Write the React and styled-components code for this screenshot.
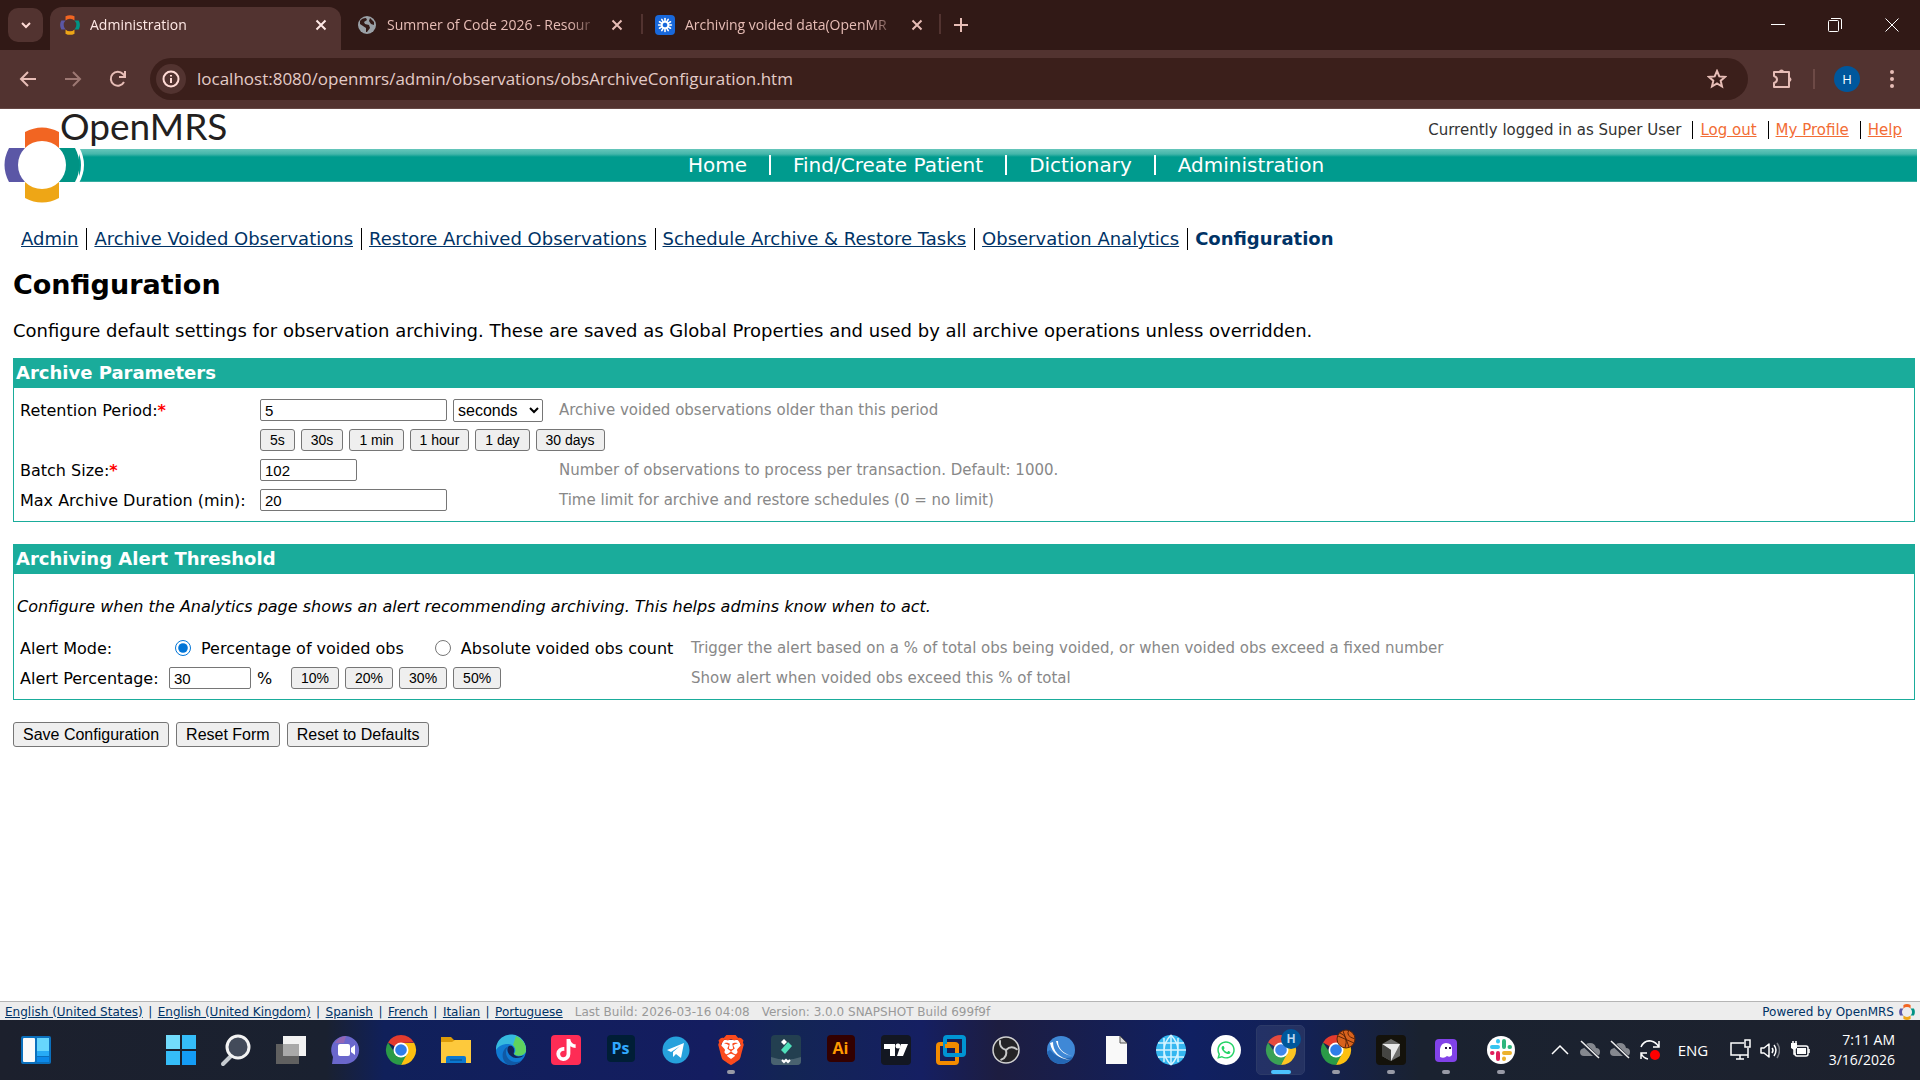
import React from "react"
import styled, { createGlobalStyle, css } from "styled-components"
import { FaBrave, FaTiktok, FaWhatsapp } from "react-icons/fa6"

const GlobalStyle = createGlobalStyle`
  * {
    box-sizing: border-box;
  }
  body {
    margin: 0;
    background: #ffffff;
    color: #000000;
    font-family: Verdana, "DejaVu Sans", sans-serif;
    font-size: 16px;
  }
  button, input, select {
    font-family: Arial, "Liberation Sans", sans-serif;
  }
`

const tabs = [
  { title: "Administration", icon: "openmrs", active: true },
  { title: "Summer of Code 2026 - Resour", icon: "globe" },
  { title: "Archiving voided data(OpenMR", icon: "talk" },
]

const sections = [
  "Admin",
  "Archive Voided Observations",
  "Restore Archived Observations",
  "Schedule Archive & Restore Tasks",
  "Observation Analytics",
]

const languages = [
  "English (United States)",
  "English (United Kingdom)",
  "Spanish",
  "French",
  "Italian",
  "Portuguese",
]

const OpenMrsMark = ({ size, hole = "#ffffff" }) => (
  <svg width={size} height={size} viewBox="0 0 76 76" aria-hidden="true">
    <path d="M21 5Q38 -4 55 5V24H21Z" fill="#f26522" />
    <path d="M21 71Q38 80 55 71V52H21Z" fill="#eea616" />
    <path d="M5 21Q-4 38 5 55H22V21Z" fill="#5b57a6" />
    <path d="M71 21Q80 38 71 55H54V21Z" fill="#009384" />
    <circle cx="38" cy="38" r="24" fill={hole} />
  </svg>
)

const GlobeMark = () => (
  <svg width="20" height="20" viewBox="0 0 20 20" aria-hidden="true">
    <circle cx="10" cy="10" r="9" fill="#9aa0a6" />
    <path
      d="M3 6Q5 3 9 3L10 5L7 7L8 9L12 10L13 13L10 17L9 17L9 13L6 11L3 9ZM13 3L17 7L17 10L14 9L12 6Z"
      fill="#331a17"
    />
  </svg>
)

const TalkMark = () => (
  <svg width="20" height="20" viewBox="0 0 20 20" aria-hidden="true">
    <rect width="20" height="20" rx="4" fill="#1868db" />
    <g stroke="#ffffff" strokeWidth="1.6" strokeLinecap="round">
      {[0, 30, 60, 90, 120, 150, 180, 210, 240, 270, 300, 330].map(angle => (
        <path key={angle} d="M10 7V3.6" transform={`rotate(${angle} 10 10)`} />
      ))}
    </g>
    <circle cx="10" cy="10" r="3.3" fill="none" stroke="#ffffff" strokeWidth="1.6" />
  </svg>
)

const tabMarks = {
  openmrs: <OpenMrsMark size={20} hole="#523330" />,
  globe: <GlobeMark />,
  talk: <TalkMark />,
}

const Line = ({ d, size = 20, box = 20, width = 2, children }) => (
  <svg
    width={size}
    height={size}
    viewBox={`0 0 ${box} ${box}`}
    fill="none"
    stroke="currentColor"
    strokeWidth={width}
    aria-hidden="true"
  >
    {d && <path d={d} />}
    {children}
  </svg>
)

const CloseMark = () => <Line size={12} box={12} d="M1.5 1.5L10.5 10.5M10.5 1.5L1.5 10.5" />

const BrowserTab = ({ title, icon, active }) => (
  <Tab $active={active}>
    {tabMarks[icon]}
    <TabTitle>{title}</TabTitle>
    <TabClose aria-label={`Close ${title}`}>
      <CloseMark />
    </TabClose>
  </Tab>
)

const Browser = () => (
  <header>
    <TabStrip>
      <TabSearch aria-label="Search tabs">
        <Line size={12} box={12} d="M2 4L6 8L10 4" />
      </TabSearch>
      {tabs.map(tab => (
        <BrowserTab key={tab.title} {...tab} />
      ))}
      <NewTab aria-label="New tab">
        <Line size={14} box={14} d="M7 0V14M0 7H14" />
      </NewTab>
      <WindowButtons>
        <WindowButton aria-label="Minimize">
          <Line size={14} box={14} width={1} d="M0 6.5H14" />
        </WindowButton>
        <WindowButton aria-label="Restore">
          <Line size={14} box={14} width={1}>
            <rect x="0.5" y="2.5" width="10" height="11" rx="1" />
            <path d="M3 .5H12Q13.500 .5 13.500 2V11" />
          </Line>
        </WindowButton>
        <WindowButton aria-label="Close">
          <Line size={14} box={14} width={1} d="M.5 .5L13.500 13.500M13.500 .5L.5 13.500" />
        </WindowButton>
      </WindowButtons>
    </TabStrip>
    <Toolbar>
      <ToolButton aria-label="Back">
        <Line d="M18 10H3M10 3L3 10L10 17" />
      </ToolButton>
      <ToolButton aria-label="Forward" $dim>
        <Line d="M2 10H17M10 3L17 10L10 17" />
      </ToolButton>
      <ToolButton aria-label="Reload">
        <Line>
          <path d="M16 13A7 7 0 1 1 15 5L17 7" />
          <path d="M17 2V8H11" />
        </Line>
      </ToolButton>
      <AddressBar>
        <SiteInfo aria-label="View site information">
          <Line size={18} box={18} width={2}>
            <circle cx="9" cy="9" r="7.500" />
            <path d="M9 8V13M9 5V6.500" />
          </Line>
        </SiteInfo>
        <AddressInput
          aria-label="Address"
          defaultValue="localhost:8080/openmrs/admin/observations/obsArchiveConfiguration.htm"
        />
        <StarButton aria-label="Bookmark this page">
          <Line width={2} d="M10 2L12.300 7.400L18 7.900L13.700 11.700L15 17.500L10 14.400L5 17.500L6.300 11.700L2 7.900L7.700 7.400Z" />
        </StarButton>
      </AddressBar>
      <ExtensionButton aria-label="Extensions">
        <Line size={22} box={22}>
          <path d="M3 4H18V19H3V15Q6 14 6 11.500Q6 9 3 8Z" strokeLinejoin="round" />
          <path d="M8 4A2.500 2.500 0 0 1 13 4ZM18 9A2.500 2.500 0 0 1 18 14Z" fill="currentColor" stroke="none" />
        </Line>
      </ExtensionButton>
      <ToolDivider />
      <Avatar>H</Avatar>
      <MenuButton aria-label="Chrome menu">
        <svg width="4" height="20" viewBox="0 0 4 20" fill="currentColor" aria-hidden="true">
          <circle cx="2" cy="3" r="2" />
          <circle cx="2" cy="10" r="2" />
          <circle cx="2" cy="17" r="2" />
        </svg>
      </MenuButton>
    </Toolbar>
  </header>
)

const ChromeMark = ({ children }) => (
  <Glyph>
    <path d="M16 16L3 8.500A15 15 0 0 1 29 8.500L16 9Z" fill="#e33b2e" />
    <path d="M16 16L29 8.500A15 15 0 0 1 16 31L20 20Z" fill="#fdc010" />
    <path d="M3 8.500A15 15 0 0 0 16 31L22 20L10 19Z" fill="#2a9a47" />
    <path d="M16 9H29.300L22 19.500Z" fill="#fdc010" />
    <circle cx="16" cy="16" r="7.500" fill="#ffffff" />
    <circle cx="16" cy="16" r="5.800" fill="#2f7de9" />
    {children}
  </Glyph>
)

const StartMark = () => (
  <Glyph>
    <g fill="#35bdf8">
      <path d="M1 1H15V15H1Z" fill="#72dcfc" />
      <path d="M17 1H31V15H17Z" />
      <path d="M1 17H15V31H1Z" />
      <path d="M17 17H31V31H17Z" fill="#149cf5" />
    </g>
  </Glyph>
)

const SearchMark = () => (
  <Glyph>
    <path d="M11 22L3 30" stroke="#c6cbd0" strokeWidth="4" strokeLinecap="round" />
    <circle cx="18" cy="13" r="11" fill="#434b5a" stroke="#f3f3f3" strokeWidth="3" />
  </Glyph>
)

const TaskViewMark = () => (
  <Glyph>
    <path d="M8 2H31V22H8Z" fill="#f2f2f2" />
    <path d="M1 10H24V30H1Z" fill="#606060" />
    <path d="M8 10H24V22H8Z" fill="#a9a9a9" />
  </Glyph>
)

const ChatMark = () => (
  <Glyph>
    <path d="M2 30L3 23A14 14 0 1 1 16 30Z" fill="#6a67cc" />
    <path d="M5 9A14 14 0 0 1 16 2L14 9Z" fill="#9366b5" />
    <rect x="8" y="10" width="12" height="12" rx="2" fill="#ffffff" />
    <path d="M21 14L25 11V21L21 18Z" fill="#ffffff" />
  </Glyph>
)

const ExplorerMark = () => (
  <Glyph>
    <path d="M1 3H11L14 6H30V12H1Z" fill="#dc9b08" />
    <path d="M1 8H12L15 6H31V29H1Z" fill="#fdc93c" />
    <path d="M6 29V24Q6 22 8 22H24Q26 22 26 24V29Z" fill="#0b78d0" />
    <path d="M10 26H22" stroke="#075599" strokeWidth="1.500" />
  </Glyph>
)

const EdgeMark = () => (
  <Glyph>
    <circle cx="16" cy="16" r="15" fill="#1079d2" />
    <path d="M1 14A15 15 0 0 1 31 17C30 22 22 23 19 20C23 15 18 9 11 10Q4 11 1 16Z" fill="#35b9df" />
    <path d="M21 2A15 15 0 0 1 31 17C30 22 22 23 19 20C22 17 20 13 18 11Z" fill="#5fd35d" />
    <path d="M14 12C8 16 11 28 21 28Q26 28 28 25Q23 32 14 31C5 27 6 15 14 12Z" fill="#1059a5" />
    <path d="M14 12C10 16 14 23 21 24Q27 24 29 21C24 24 17 22 19 18C20 14 17 11 14 12Z" fill="#142257" />
  </Glyph>
)

const AppTile = ({ fill, children }) => (
  <Glyph>
    <rect x="1" y="1" width="30" height="30" rx="4" fill={fill} />
    {children}
  </Glyph>
)

const LetterMark = ({ fill, color, children }) => (
  <LetterTile $fill={fill} $color={color}>
    {children}
  </LetterTile>
)

const TelegramMark = () => (
  <Glyph>
    <circle cx="16" cy="16" r="13.500" fill="#26a1dc" />
    <path d="M7 16L24 9L21 24L16 20L13 23V18L20 12L11 18Z" fill="#ffffff" />
  </Glyph>
)

const BraveMark = () => (
  <Glyph>
    <path d="M8 6H24L26 12L23 23L16 28L9 23L6 12Z" fill="#ffffff" />
    <FaBrave x="1" y="1" size={30} color="#fb4b1d" />
  </Glyph>
)

const FilmoraMark = () => (
  <AppTile fill="#233f50">
    <path d="M1 23Q16 28 31 23V27Q31 31 27 31H5Q1 31 1 27Z" fill="#496270" />
    <path d="M14 5L17 8L14 11L11 8Z" fill="#ffffff" />
    <path d="M18 8L22 12L15 20L11 16Z" fill="#4fe0ba" />
    <path d="M12 26L14 28L16 26L18 28L20 26" stroke="#ffffff" strokeWidth="2" fill="none" />
  </AppTile>
)

const TradingMark = () => (
  <AppTile fill="#131722">
    <path d="M4 10H15V22H10V15H4ZM21 10H28L23 22H17Z" fill="#ffffff" />
    <circle cx="18" cy="12" r="2.500" fill="#ffffff" />
  </AppTile>
)

const VmwareMark = () => (
  <Glyph fill="none" strokeWidth="4">
    <rect x="3" y="10" width="19" height="19" rx="2" stroke="#f38b00" />
    <rect x="10" y="3" width="19" height="18" rx="2" stroke="#0095d3" />
    <path d="M10 12H22V18" stroke="#f38b00" />
  </Glyph>
)

const ObsMark = () => (
  <Glyph>
    <circle cx="16" cy="16" r="13" fill="#242326" stroke="#d0d0d0" strokeWidth="1.500" />
    {[0, 120, 240].map(angle => (
      <path
        key={angle}
        d="M16 16Q17 9 10 6Q14 10 12.500 13Q13 14.500 16 16Z"
        fill="#242326"
        stroke="#d0d0d0"
        strokeWidth="0"
        transform={`rotate(${angle} 16 16)`}
      />
    ))}
    <g fill="none" stroke="#c8c8c8" strokeWidth="2" strokeLinecap="round">
      <path d="M16 16Q9 14 10 7" />
      <path d="M16 16Q9 14 10 7" transform="rotate(120 16 16)" />
      <path d="M16 16Q9 14 10 7" transform="rotate(240 16 16)" />
    </g>
  </Glyph>
)

const SwirlMark = () => (
  <Glyph>
    <circle cx="16" cy="16" r="14" fill="#3f88d6" />
    <path d="M2 18A14 14 0 0 0 28 23Q14 27 5 16Z" fill="#2467b5" />
    <path d="M13 7Q13 18 27 22Q14 20 11 7Z" fill="#ffffff" />
    <path d="M8 8Q8 22 25 26Q8 24 5 9Z" fill="#ffffff" />
  </Glyph>
)

const DocumentMark = () => (
  <Glyph>
    <path d="M6 2H20L27 9V30H6Z" fill="#f9f9f9" />
    <path d="M20 2V9H27Z" fill="#dcdcdc" stroke="#555555" />
  </Glyph>
)

const WorldMark = () => (
  <Glyph>
    <circle cx="16" cy="16" r="15" fill="#35b7f0" />
    <g fill="none" stroke="#d4f4ff" strokeWidth="1.500">
      <path d="M16 1V31M1 16H31M3 9H29M3 23H29" />
      <path d="M16 1Q2 16 16 31M16 1Q30 16 16 31M9 4V28M23 4V28" />
    </g>
  </Glyph>
)

const WhatsappMark = () => (
  <Glyph>
    <circle cx="16" cy="16" r="15" fill="#ffffff" />
    <FaWhatsapp x="6" y="6" size={20} color="#25d366" />
  </Glyph>
)

const BallBadge = () => (
  <g stroke="#5d2508" strokeWidth="1">
    <circle cx="26" cy="5" r="9" fill="#d8621d" />
    <path d="M18 2L34 9M23 -3L29 13M20 -1Q29 2 25 14M29 -4Q25 2 35 5" fill="none" />
  </g>
)

const CursorMark = () => (
  <AppTile fill="#14120b">
    <path d="M16 5L25 10V22L16 27L7 22V10Z" fill="#6d6d6b" />
    <path d="M7 10H25L16 27V16Z" fill="#e9e9e9" />
    <path d="M7 10L16 16V27L7 22Z" fill="#454542" />
  </AppTile>
)

const GhostMark = () => (
  <Glyph>
    <rect x="5" y="5" width="22" height="23" rx="4" fill="#8142e8" />
    <path d="M10 23V15Q11 9 16 9Q22 9 22 15V21Q20 24 17 22Q14 25 10 23Z" fill="#ffffff" />
    <path d="M16 13V15M20 13V15" stroke="#26123f" strokeWidth="2" />
  </Glyph>
)

const SlackMark = () => (
  <Glyph>
    <circle cx="16" cy="16" r="14" fill="#ffffff" />
    <g strokeWidth="4" strokeLinecap="round">
      <path d="M7 13H13M13 7V7.500" stroke="#36c5f0" />
      <path d="M19 7V13M25 13H24.500" stroke="#2eb67d" />
      <path d="M25 19H19M19 25V24.500" stroke="#ecb22e" />
      <path d="M13 25V19M7 19H7.500" stroke="#e01e5a" />
    </g>
  </Glyph>
)

const apps = [
  { name: "Start", icon: <StartMark /> },
  { name: "Search", icon: <SearchMark /> },
  { name: "Task View", icon: <TaskViewMark /> },
  { name: "Chat", icon: <ChatMark /> },
  { name: "Google Chrome", icon: <ChromeMark /> },
  { name: "File Explorer", icon: <ExplorerMark /> },
  { name: "Microsoft Edge", icon: <EdgeMark /> },
  {
    name: "TikTok",
    icon: (
      <AppTile fill="#fe2c55">
        <FaTiktok x="5" y="5" size={22} color="#ffffff" />
      </AppTile>
    ),
  },
  { name: "Photoshop", icon: <LetterMark fill="#001e36" color="#31a8ff">Ps</LetterMark> },
  { name: "Telegram", icon: <TelegramMark /> },
  { name: "Brave", icon: <BraveMark />, running: true },
  { name: "Filmora", icon: <FilmoraMark /> },
  { name: "Illustrator", icon: <LetterMark fill="#330000" color="#ff9a00">Ai</LetterMark> },
  { name: "TradingView", icon: <TradingMark /> },
  { name: "VMware", icon: <VmwareMark /> },
  { name: "OBS Studio", icon: <ObsMark /> },
  { name: "Network monitor", icon: <SwirlMark /> },
  { name: "Document", icon: <DocumentMark /> },
  { name: "Web", icon: <WorldMark /> },
  { name: "WhatsApp", icon: <WhatsappMark /> },
  { name: "Chrome, Administration", icon: <ChromeMark />, badge: "H", running: true, active: true },
  {
    name: "Chrome, second profile",
    icon: (
      <ChromeMark>
        <BallBadge />
      </ChromeMark>
    ),
    running: true,
  },
  { name: "Cursor", icon: <CursorMark />, running: true },
  { name: "Ghost", icon: <GhostMark />, running: true },
  { name: "Slack", icon: <SlackMark />, running: true },
]

const CloudOff = () => (
  <svg width="22" height="20" viewBox="0 0 22 20" aria-hidden="true">
    <path d="M5 16Q1 16 1 12Q1 9 5 8Q6 3 11 3Q16 3 17 8Q21 8 21 12Q21 16 17 16Z" fill="#85888f" />
    <path d="M1 1L20 19" stroke="#1c212e" strokeWidth="4" />
    <path d="M2 1L20 18" stroke="#f0f0f0" strokeWidth="1.500" />
  </svg>
)

const Taskbar = () => (
  <Bar>
    <TaskButton aria-label="Widgets" $wide>
      <Glyph>
        <rect x="1" y="2" width="30" height="28" rx="2" fill="#0b70bd" />
        <rect x="3" y="4" width="12" height="24" rx="1" fill="#fafafa" />
        <path d="M17 4H29V17H17Z" fill="#67d6fd" />
        <path d="M17 17H29V22H17Z" fill="#27abf6" />
        <path d="M17 23H29V28H17Z" fill="#0c89e9" />
      </Glyph>
    </TaskButton>
    <TaskApps>
      {apps.map(app => (
        <TaskButton
          key={app.name}
          aria-label={app.name}
          $running={app.running}
          $active={app.active}
        >
          {app.icon}
          {app.badge && <AppBadge>{app.badge}</AppBadge>}
        </TaskButton>
      ))}
    </TaskApps>
    <Tray>
      <TrayButton aria-label="Show hidden icons">
        <Line width={1.5} d="M2 14L10 6L18 14" />
      </TrayButton>
      <TrayButton aria-label="Cloud storage">
        <CloudOff />
      </TrayButton>
      <TrayButton aria-label="Cloud backup">
        <CloudOff />
      </TrayButton>
      <TrayButton aria-label="Updates">
        <Line size={22} box={22} width={1.5}>
          <path d="M2 8Q5 1 12 2Q17 3 20 8M20 2V8H14M9 20Q4 19 2 14M2 20V14H8" />
          <circle cx="16" cy="16" r="5" fill="#ff0000" stroke="none" />
        </Line>
      </TrayButton>
      <Language>ENG</Language>
      <TrayButton aria-label="Network">
        <Line size={22} box={22} width={1.5}>
          <path d="M15 4H2V16H19V10M7 20H15M11 16V20M19 9V19" />
          <path d="M16 1H21V8H16Z" />
        </Line>
      </TrayButton>
      <TrayButton aria-label="Volume">
        <Line width={1.5}>
          <path d="M1 8V13H4L9 17V4L4 8Z" strokeLinejoin="round" />
          <path d="M12 8Q14 10 12 13M14 5Q18 10 14 16" />
          <path d="M17 3Q22 10 17 18" opacity="0.4" />
        </Line>
      </TrayButton>
      <TrayButton aria-label="Battery">
        <Line width={1.5}>
          <rect x="5" y="6" width="13" height="10" rx="2" />
          <path d="M7 8H16V14H7ZM1 3H7V8L4 10L1 8Z" fill="currentColor" stroke="none" />
          <path d="M3 1V4M6 1V4M4 8V14H6M19 9V13" />
        </Line>
      </TrayButton>
      <Clock>
        <span>7:11 AM</span>
        <span>3/16/2026</span>
      </Clock>
    </Tray>
  </Bar>
)

const App = () => (
  <Desktop>
    <GlobalStyle />
    <Browser />
    <Page>
      <PageHeader>
        <Logo href="#home" aria-label="OpenMRS home">
          <LogoMark>
            <svg width="84" height="76" viewBox="0 0 84 76" aria-hidden="true">
              <path d="M72 20H75Q85 38 75 56H72Q82 38 72 20Z" fill="#ffffff" />
            </svg>
          </LogoMark>
          <LogoMark>
            <OpenMrsMark size={76} />
          </LogoMark>
          <LogoText>OpenMRS</LogoText>
        </Logo>
        <UserBar>
          <UserItem>Currently logged in as Super User</UserItem>
          {["Log out", "My Profile", "Help"].map(label => (
            <UserItem key={label}>
              <UserLink href="#user">{label}</UserLink>
            </UserItem>
          ))}
        </UserBar>
        <MainNav>
          {["Home", "Find/Create Patient", "Dictionary", "Administration"].map(label => (
            <NavLink key={label} href="#nav">
              {label}
            </NavLink>
          ))}
        </MainNav>
      </PageHeader>

      <Content>
        <SectionMenu>
          {sections.map(label => (
            <SectionItem key={label}>
              <a href="#section">{label}</a>
            </SectionItem>
          ))}
          <SectionItem>
            <strong>Configuration</strong>
          </SectionItem>
        </SectionMenu>
        <Title>Configuration</Title>
        <Intro>
          Configure default settings for observation archiving. These are saved as Global
          Properties and used by all archive operations unless overridden.
        </Intro>

        <form onSubmit={e => e.preventDefault()}>
          <BoxHeader>Archive Parameters</BoxHeader>
          <Box>
            <ParameterGrid>
              <label htmlFor="retention">
                Retention Period:<Required>*</Required>
              </label>
              <Controls>
                <TextInput id="retention" defaultValue="5" />
                <UnitSelect aria-label="Retention unit" defaultValue="seconds">
                  <option>seconds</option>
                  <option>minutes</option>
                  <option>hours</option>
                  <option>days</option>
                </UnitSelect>
              </Controls>
              <Hint>Archive voided observations older than this period</Hint>

              <PresetRow>
                {["5s", "30s", "1 min", "1 hour", "1 day", "30 days"].map(label => (
                  <Preset key={label} type="button">
                    {label}
                  </Preset>
                ))}
              </PresetRow>

              <label htmlFor="batch">
                Batch Size:<Required>*</Required>
              </label>
              <Controls>
                <TextInput id="batch" defaultValue="102" $size="medium" />
              </Controls>
              <Hint>Number of observations to process per transaction. Default: 1000.</Hint>

              <label htmlFor="duration">Max Archive Duration (min):</label>
              <Controls>
                <TextInput id="duration" defaultValue="20" />
              </Controls>
              <Hint>Time limit for archive and restore schedules (0 = no limit)</Hint>
            </ParameterGrid>
          </Box>

          <BoxHeader>Archiving Alert Threshold</BoxHeader>
          <Box>
            <BoxNote>
              Configure when the Analytics page shows an alert recommending archiving. This helps
              admins know when to act.
            </BoxNote>
            <AlertGrid>
              <span id="mode">Alert Mode:</span>
              <RadioGroup role="radiogroup" aria-labelledby="mode">
                <RadioLabel>
                  <Radio type="radio" name="mode" defaultChecked />
                  Percentage of voided obs
                </RadioLabel>
                <RadioLabel>
                  <Radio type="radio" name="mode" />
                  Absolute voided obs count
                </RadioLabel>
              </RadioGroup>
              <Hint>
                Trigger the alert based on a % of total obs being voided, or when voided obs exceed
                a fixed number
              </Hint>

              <label htmlFor="percentage">Alert Percentage:</label>
              <Controls>
                <TextInput id="percentage" defaultValue="30" $size="small" />
                <Percent>%</Percent>
                {["10%", "20%", "30%", "50%"].map(label => (
                  <Preset key={label} type="button">
                    {label}
                  </Preset>
                ))}
              </Controls>
              <Hint>Show alert when voided obs exceed this % of total</Hint>
            </AlertGrid>
          </Box>

          <Actions>
            <ActionButton type="submit">Save Configuration</ActionButton>
            <ActionButton type="reset">Reset Form</ActionButton>
            <ActionButton type="button">Reset to Defaults</ActionButton>
          </Actions>
        </form>
      </Content>

      <Footer>
        {languages.map((label, i) => (
          <React.Fragment key={label}>
            {i > 0 && <FooterBar>|</FooterBar>}
            <a href="#language">{label}</a>
          </React.Fragment>
        ))}
        <Build>Last Build: 2026-03-16 04:08</Build>
        <Build>Version: 3.0.0 SNAPSHOT Build 699f9f</Build>
        <Powered href="#openmrs">
          Powered by OpenMRS
          <OpenMrsMark size={16} hole="#ededed" />
        </Powered>
      </Footer>
    </Page>
    <Taskbar />
  </Desktop>
)

export default App

const Desktop = styled.div`
  display: flex;
  flex-direction: column;
  min-height: 100vh;
`

const bareButton = css`
  display: flex;
  align-items: center;
  justify-content: center;
  flex: none;
  padding: 0;
  border: 0;
  background: none;
  color: #e7bdb6;
`

/* browser frame */

const TabStrip = styled.div`
  display: flex;
  align-items: center;
  height: 50px;
  padding-left: 8px;
  background: #311916;
  font-family: "Segoe UI", "Open Sans", sans-serif;
`
const TabSearch = styled.button`
  ${bareButton}
  width: 35px;
  height: 34px;
  margin-right: 7px;
  border-radius: 10px;
  background: #523330;
  color: #ffdad5;
`
const Tab = styled.div`
  display: flex;
  align-items: center;
  width: ${props => (props.$active ? "291px" : "300px")};
  height: 43px;
  align-self: flex-end;
  padding: 0 10px 7px;
  border-radius: 12px 12px 0 0;
  background: ${props => (props.$active ? "#523330" : "transparent")};
  color: ${props => (props.$active ? "#ffe9e6" : "#e7bdb6")};
  & + & {
    padding-left: 16px;
    padding-right: 14px;
  }
  & + & + & {
    padding-left: 14px;
    border-radius: 0;
    background: linear-gradient(#523330, #523330) 0 7px / 2px 20px no-repeat,
      linear-gradient(#523330, #523330) 100% 7px / 2px 20px no-repeat;
  }
`
const TabTitle = styled.span`
  flex: 1;
  margin-left: 10px;
  margin-right: 8px;
  overflow: hidden;
  white-space: nowrap;
  font-size: 14px;
  line-height: 20px;
  mask-image: linear-gradient(to right, #000 calc(100% - 30px), transparent);
`
const TabClose = styled.button`
  ${bareButton}
  width: 20px;
  height: 20px;
  color: inherit;
`
const NewTab = styled.button`
  ${bareButton}
  width: 28px;
  height: 28px;
  margin-left: 6px;
`
const WindowButtons = styled.div`
  display: flex;
  margin-left: auto;
`
const WindowButton = styled.button`
  ${bareButton}
  width: 57px;
  height: 50px;
  color: #ffffff;
`
const Toolbar = styled.div`
  display: flex;
  align-items: center;
  height: 59px;
  padding: 0 16px 1px 5px;
  border-bottom: 1px solid #654845;
  background: #523330;
`
const ToolButton = styled.button`
  ${bareButton}
  width: 45px;
  height: 42px;
  opacity: ${props => (props.$dim ? 0.5 : 1)};
`
const AddressBar = styled.div`
  display: flex;
  align-items: center;
  flex: 1;
  height: 42px;
  margin-left: 10px;
  padding: 0 20px 0 6px;
  border-radius: 21px;
  background: #3b1f1b;
`
const SiteInfo = styled.button`
  ${bareButton}
  width: 30px;
  height: 30px;
  border-radius: 15px;
  background: #523330;
  color: #ffdad5;
`
const AddressInput = styled.input`
  flex: 1;
  min-width: 0;
  padding: 0 11px;
  border: 0;
  outline: 0;
  background: none;
  color: #e3cbc7;
  font-family: "Segoe UI", "Open Sans", sans-serif;
  font-size: 17px;
`
const StarButton = styled.button`
  ${bareButton}
  width: 22px;
  height: 22px;
`
const ExtensionButton = styled.button`
  ${bareButton}
  width: 28px;
  height: 32px;
  margin-left: 20px;
`
const ToolDivider = styled.span`
  width: 2px;
  height: 20px;
  margin: 0 19px 0 17px;
  background: #6d4a46;
`
const Avatar = styled.button`
  ${bareButton}
  width: 26px;
  height: 26px;
  border-radius: 13px;
  background: #00579c;
  color: #ffffff;
  font-family: "Open Sans", sans-serif;
  font-size: 13px;
`
const MenuButton = styled.button`
  ${bareButton}
  width: 24px;
  height: 32px;
  margin-left: 20px;
`

/* OpenMRS page */

const Page = styled.main`
  display: flex;
  flex: 1;
  flex-direction: column;
`
const PageHeader = styled.div`
  position: relative;
`
const Logo = styled.a`
  color: #231f20;
  text-decoration: none;
`
const LogoMark = styled.span`
  position: absolute;
  top: 18px;
  left: 4px;
  line-height: 0;
`
const LogoText = styled.span`
  position: absolute;
  top: 0;
  left: 60px;
  font-family: "Gill Sans", Lato, sans-serif;
  font-size: 37px;
  line-height: 34px;
`
const UserBar = styled.ul`
  display: flex;
  align-items: center;
  justify-content: flex-end;
  height: 40px;
  margin: 0;
  padding: 2px 18px 0 240px;
  list-style: none;
  color: #333333;
  font-size: 15px;
`
const UserItem = styled.li`
  line-height: 18px;
  & + & {
    margin-left: 11px;
    padding-left: 7px;
    border-left: 1px solid #000000;
  }
`
const UserLink = styled.a`
  color: #f26d35;
`
const MainNav = styled.nav`
  display: flex;
  align-items: center;
  justify-content: center;
  height: 33px;
  margin: 0 3px 0 79px;
  padding-left: 16px;
  border-bottom: 1px solid #35aca0;
  background: linear-gradient(#66c6bb, #45b6aa 5px, #009b8e 8px);
`
const NavLink = styled.a`
  color: #ffffff;
  font-size: 20px;
  line-height: 20px;
  text-decoration: none;
  & + & {
    margin-left: 22px;
    padding-left: 22px;
    border-left: 2px solid #ffffff;
  }
`
const Content = styled.div`
  flex: 1;
  padding: 46px 5px 20px 13px;
`
const SectionMenu = styled.ul`
  display: flex;
  margin: 0;
  padding: 0 8px;
  list-style: none;
  color: #003366;
  font-size: 18px;
  line-height: 22px;
  a {
    color: inherit;
  }
`
const SectionItem = styled.li`
  & + & {
    margin-left: 8px;
    padding-left: 7px;
    border-left: 1px solid #000000;
  }
`
const Title = styled.h2`
  margin: 18px 0;
  font-size: 27px;
  line-height: 34px;
`
const Intro = styled.p`
  margin: 0 0 16px;
  font-size: 18px;
  line-height: 22px;
`
const BoxHeader = styled.h3`
  margin: 0;
  padding: 4px 3px;
  background: #1aac9b;
  color: #ffffff;
  font-size: 18px;
  line-height: 22px;
`
const Box = styled.div`
  margin-bottom: 22px;
  padding: 7px 3px 6px;
  border: 1px solid #1aac9b;
  border-top: 0;
`
const FormGrid = styled.div`
  display: grid;
  grid-auto-rows: 30px;
  align-items: center;
  padding-left: 3px;
  font-size: 16px;
`
const ParameterGrid = styled(FormGrid)`
  grid-template-columns: 240px 299px 1fr;
`
const AlertGrid = styled(FormGrid)`
  grid-template-columns: 149px 522px 1fr;
`
const BoxNote = styled.p`
  margin: 14px 0;
  font-size: 16px;
  font-style: italic;
  line-height: 24px;
`
const Required = styled.strong`
  color: #ff0000;
`
const Hint = styled.span`
  color: #888888;
  font-size: 15px;
`
const Controls = styled.div`
  display: flex;
  align-items: center;
  gap: 6px;
`
const PresetRow = styled(Controls)`
  grid-column: 2 / -1;
`
const RadioGroup = styled.div`
  display: flex;
`
const inputWidths = { small: "82px", medium: "97px", large: "187px" }
const TextInput = styled.input`
  width: ${props => inputWidths[props.$size || "large"]};
  height: 22px;
  padding: 0 4px;
  border: 1px solid #767676;
  border-radius: 2px;
  background: #ffffff;
  font-size: 15px;
`
const UnitSelect = styled.select`
  width: 90px;
  height: 23px;
  padding: 0;
  border: 1px solid #767676;
  border-radius: 2px;
  background: #ffffff;
  color: #000000;
  font-size: 16px;
`
const Preset = styled.button`
  height: 22px;
  padding: 0 9px;
  border: 1px solid #767676;
  border-radius: 3px;
  background: #efefef;
  color: #000000;
  font-size: 14px;
`
const Percent = styled.span`
  width: 28px;
`
const RadioLabel = styled.label`
  display: flex;
  align-items: center;
  & + & {
    margin-left: 25px;
  }
`
const Radio = styled.input`
  width: 16px;
  height: 16px;
  margin: 0 10px 0 6px;
  accent-color: #0075d7;
`
const Actions = styled.div`
  display: flex;
  gap: 7px;
`
const ActionButton = styled.button`
  height: 25px;
  padding: 0 9px;
  border: 1px solid #767676;
  border-radius: 3px;
  background: #efefef;
  color: #000000;
  font-size: 16px;
`
const Footer = styled.footer`
  display: flex;
  align-items: center;
  height: 19px;
  padding: 1px 5px 0;
  overflow: hidden;
  border-top: 1px solid #b5b5b5;
  background: #ededed;
  color: #003366;
  font-size: 12px;
  line-height: 16px;
  a {
    color: inherit;
  }
`
const FooterBar = styled.span`
  width: 15px;
  text-align: center;
`
const Build = styled.span`
  margin-left: 12px;
  color: #999999;
`
const Powered = styled.a`
  display: flex;
  align-items: center;
  gap: 5px;
  margin-left: auto;
  text-decoration: none;
`

/* Windows taskbar */

const Bar = styled.footer`
  display: flex;
  height: 60px;
  background: linear-gradient(
    to right,
    #1c202d 0,
    #1a2130 17%,
    #10205a 20%,
    #141d60 37%,
    #132554 41%,
    #151f62 48%,
    #1d1d40 52%,
    #102062 62%,
    #132154 68%,
    #1a2230 74%,
    #1d212d 100%
  );
  font-family: "Segoe UI", "Open Sans", sans-serif;
`
const Glyph = styled.svg.attrs({ viewBox: "0 0 32 32", "aria-hidden": true })`
  width: 32px;
  height: 32px;
  overflow: visible;
`
const TaskApps = styled.div`
  display: flex;
  margin-left: 81px;
`
const TaskButton = styled.button`
  ${bareButton}
  position: relative;
  width: ${props => (props.$wide ? "72px" : "55px")};
  height: 60px;
  ${props =>
    props.$active &&
    css`
      &::before {
        content: "";
        position: absolute;
        inset: 5px 3px;
        border: 1px solid #2c3a68;
        border-radius: 5px;
        background: #ffffff14;
      }
    `}
  ${props =>
    props.$running &&
    css`
      &::after {
        content: "";
        position: absolute;
        bottom: 6px;
        width: ${props.$active ? "20px" : "8px"};
        height: 4px;
        border-radius: 2px;
        background: ${props.$active ? "#4cc2ff" : "#989aa6"};
      }
    `}
`
const AppBadge = styled.span`
  position: absolute;
  top: 9px;
  right: 7px;
  width: 20px;
  border-radius: 10px;
  background: #00579c;
  color: #b9d6f0;
  font-size: 12px;
  font-weight: 600;
  line-height: 20px;
`
const LetterTile = styled.span`
  width: 28px;
  height: 27px;
  margin-bottom: 3px;
  border-radius: 4px;
  background: ${props => props.$fill};
  color: ${props => props.$color};
  font-family: "Open Sans", sans-serif;
  font-size: 16px;
  font-weight: 700;
  line-height: 26px;
`
const Tray = styled.div`
  display: flex;
  align-items: center;
  margin-left: auto;
  padding-right: 25px;
  color: #ffffff;
`
const TrayButton = styled.button`
  ${bareButton}
  width: 30px;
  height: 40px;
  color: #ffffff;
`
const Language = styled.span`
  width: 60px;
  padding-right: 4px;
  font-size: 15px;
  text-align: center;
`
const Clock = styled.time`
  display: flex;
  flex-direction: column;
  width: 80px;
  font-size: 14px;
  line-height: 20px;
  text-align: right;
`
